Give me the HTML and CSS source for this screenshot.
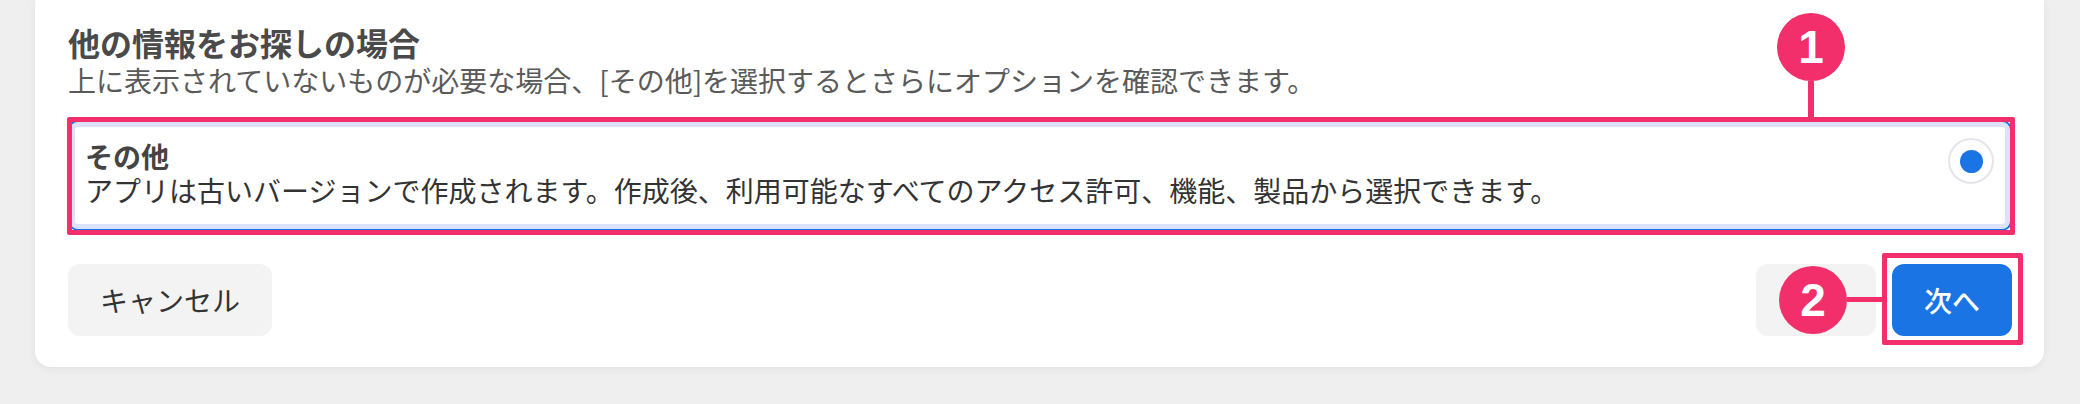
FILE: index.html
```html
<!DOCTYPE html>
<html lang="ja">
<head>
    <meta charset="UTF-8">
    <meta name="viewport" content="width=device-width, initial-scale=1.0">
    <title>その他を選択</title>
    <link rel="stylesheet" href="styles.css">
</head>
<body>

    <div class="card">
        <h2 class="title">他の情報をお探しの場合</h2>
        <p class="lead">上に表示されていないものが必要な場合、[その他]を選択するとさらにオプションを確認できます。</p>

        <!-- 選択中のオプション -->
        <label class="option">
            <div class="option-text">
                <div class="option-name">その他</div>
                <div class="option-desc">アプリは古いバージョンで作成されます。作成後、利用可能なすべてのアクセス許可、機能、製品から選択できます。</div>
            </div>
            <span class="radio"><span class="dot"></span></span>
            <span class="badge badge-top">1</span>
        </label>

        <div class="actions">
            <button class="btn">キャンセル</button>
            <div class="actions-right">
                <button class="btn back" aria-label="戻る"></button>
                <span class="mark"><button class="btn primary">次へ</button></span>
                <span class="badge badge-side">2</span>
            </div>
        </div>
    </div>

</body>
</html>
```

FILE: styles.css
```css
body {
    margin: 0;
    padding: 0 36px 0 35px;
    background-color: #efefef;
    font-family: 'Noto Sans CJK JP', 'Noto Sans', sans-serif;
    color: #333;
    height: 404px;
    overflow: hidden;
}

.card {
    background-color: #fff;
    padding: 22px 32px 31px 33px;
    border-radius: 0 0 16px 16px;
    box-shadow: 0 2px 8px rgba(0, 0, 0, 0.06);
}

.title {
    margin: 0;
    font-size: 32px;
    line-height: 40px;
    font-weight: 700;
    color: #4a4a4a;
}

.lead {
    margin: 0;
    font-size: 28px;
    line-height: 36px;
    color: #5a5a5a;
}

.option {
    position: relative;
    display: flex;
    justify-content: space-between;
    align-items: flex-start;
    margin-top: 22px;
    padding: 16px 16px 23px 15px;
    border: 2px solid #1b74e4;
    border-radius: 10px;
    box-shadow: inset 0 0 0 5px #dae3fb;
    cursor: pointer;
}

/* 注釈の枠 */
.option::after,
.mark::after {
    content: '';
    position: absolute;
    border: 5px solid #f22f6a;
    border-radius: 2px;
    pointer-events: none;
}

.option::after {
    top: -5px;
    bottom: -6px;
    left: -3px;
    right: -5px;
}

.option-name {
    font-size: 28px;
    line-height: 36px;
    font-weight: 700;
    color: #444;
}

.option-desc {
    font-size: 28px;
    line-height: 32px;
    color: #333;
}

.radio {
    display: flex;
    align-items: center;
    justify-content: center;
    width: 42px;
    height: 42px;
    border: 2px solid #e4e6eb;
    border-radius: 50%;
    flex-shrink: 0;
}

.dot {
    width: 23px;
    height: 23px;
    border-radius: 50%;
    background-color: #1b74e4;
}

.actions {
    display: flex;
    justify-content: space-between;
    margin-top: 33px;
}

.actions-right {
    position: relative;
    display: flex;
    gap: 16px;
}

.btn {
    height: 72px;
    padding: 0 32px;
    border: none;
    border-radius: 12px;
    background-color: #f3f3f3;
    font-family: inherit;
    font-size: 28px;
    color: #333;
    cursor: pointer;
}

.btn.back {
    width: 120px;
}

.btn.primary {
    background-color: #1b74e4;
    color: #fff;
    font-weight: 500;
}

.mark {
    position: relative;
    display: flex;
}

.mark::after {
    top: -11px;
    bottom: -9px;
    left: -10px;
    right: -11px;
}

/* 番号バッジ */
.badge {
    position: absolute;
    z-index: 2;
    display: flex;
    align-items: center;
    justify-content: center;
    width: 68px;
    height: 68px;
    border-radius: 50%;
    background-color: #f22f6a;
    color: #fff;
    font-family: 'Liberation Sans', Arial, sans-serif;
    font-size: 46px;
    font-weight: 700;
}

.badge::after {
    content: '';
    position: absolute;
    background-color: #f22f6a;
}

.badge-top {
    top: -109px;
    right: 165px;
}

.badge-top::after {
    top: 100%;
    left: 31px;
    width: 6px;
    height: 40px;
}

.badge-side {
    top: 2px;
    left: 23px;
}

.badge-side::after {
    left: 100%;
    top: 31px;
    width: 38px;
    height: 5px;
}
```
